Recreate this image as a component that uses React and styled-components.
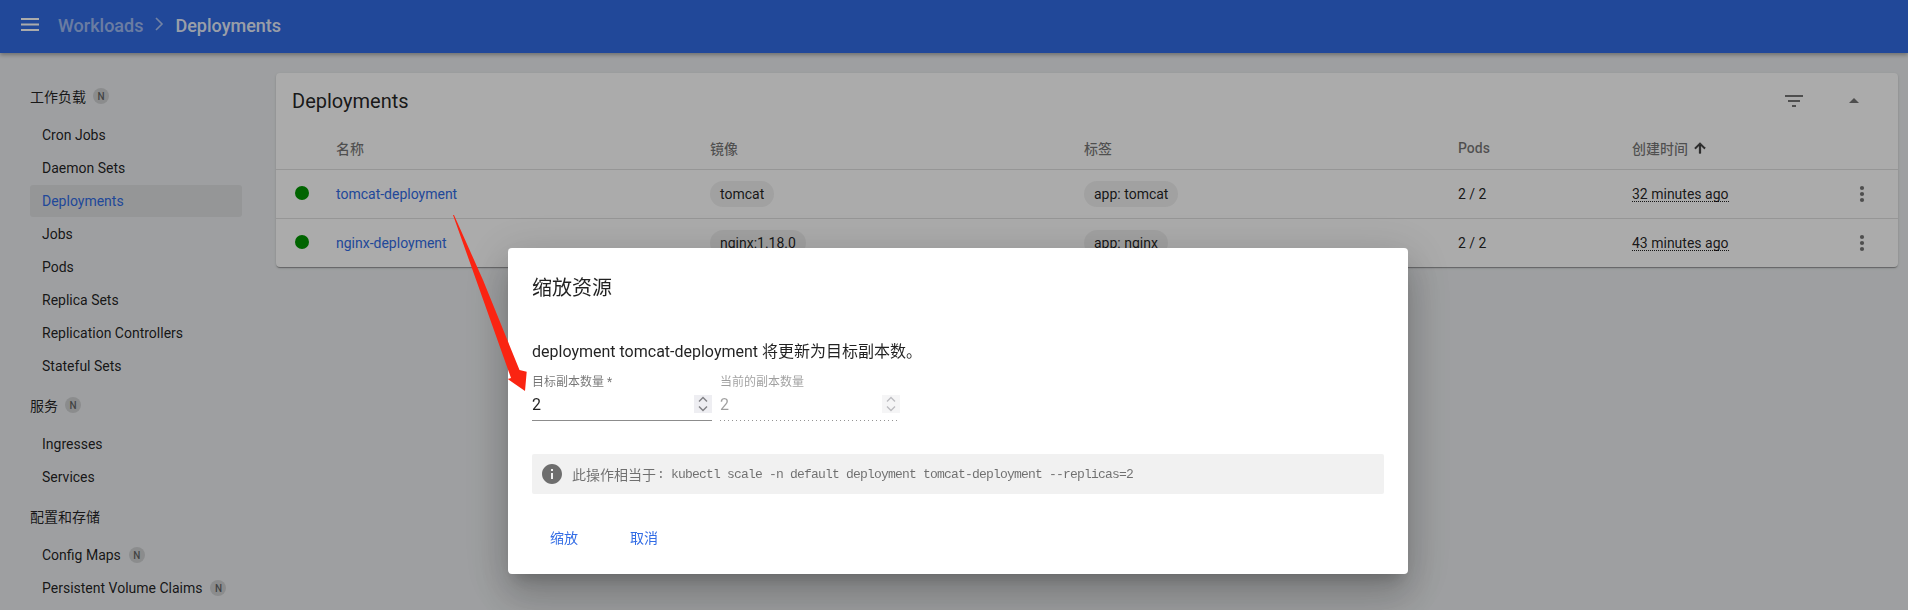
import React from 'react';
import styled, { createGlobalStyle } from 'styled-components';

const GlobalStyle = createGlobalStyle`
  html, body {
    margin: 0;
    height: 100%;
    overflow: hidden;
    background: #eceef0;
    font-family: Roboto, "Noto Sans CJK SC", sans-serif;
    font-size: 14px;
    color: rgba(0, 0, 0, 0.87);
  }
`;

const Page = styled.div`
  height: 610px;
  overflow: hidden;
  display: flex;
  flex-direction: column;
`;

const Toolbar = styled.header`
  flex: none;
  height: 53px;
  box-sizing: border-box;
  background: #326ce5;
  box-shadow: 0 2px 4px rgba(0, 0, 0, 0.3);
  display: flex;
  align-items: center;
  padding: 0 0 2px 21px;
  color: #fff;
  position: relative;
`;

const Crumb = styled.span`
  font-size: 18px;
  font-weight: 500;
  color: ${(props) => (props.$current ? 'rgba(255,255,255,0.9)' : 'rgba(255,255,255,0.55)')};
`;

const MenuIcon = styled.svg`
  width: 18px;
  height: 13px;
  margin: -2px 19px 0 0;
`;

const ChevronIcon = styled.svg`
  width: 10px;
  height: 14px;
  margin: -3px 11px 0 11px;
`;

const Body = styled.div`
  flex: 1;
  display: flex;
  min-height: 0;
`;

const Sidebar = styled.nav`
  flex: none;
  width: 246px;
  padding: 31px 0 0 30px;
  box-sizing: content-box;
`;

const SideGroup = styled.div`
  display: flex;
  flex-direction: column;
  width: 212px;
  margin-bottom: 10px;
`;

const SideTitle = styled.div`
  height: 24px;
  display: flex;
  align-items: center;
  gap: 7px;
  margin-bottom: 11px;
`;

const SideItem = styled.div`
  height: 32px;
  margin-bottom: 1px;
  display: flex;
  align-items: center;
  gap: 8px;
  padding-left: 12px;
  border-radius: 3px;
  color: ${(props) => (props.$active ? '#326ce5' : 'rgba(0, 0, 0, 0.87)')};
  background: ${(props) => (props.$active ? 'rgba(0, 0, 0, 0.06)' : 'transparent')};
`;

const Badge = styled.span`
  width: 16px;
  height: 16px;
  border-radius: 50%;
  background: rgba(0, 0, 0, 0.12);
  color: rgba(0, 0, 0, 0.54);
  font-size: 10px;
  font-weight: 500;
  display: inline-flex;
  align-items: center;
  justify-content: center;
`;

const Main = styled.main`
  flex: 1;
  min-width: 0;
  padding: 20px 10px 0 0;
`;

const Card = styled.section`
  background: #fff;
  border-radius: 4px;
  box-shadow: 0 2px 1px -1px rgba(0, 0, 0, 0.2), 0 1px 1px rgba(0, 0, 0, 0.14), 0 1px 3px rgba(0, 0, 0, 0.12);
`;

const CardHeader = styled.div`
  height: 56px;
  display: flex;
  align-items: center;
  padding-left: 16px;
`;

const CardTitle = styled.h2`
  flex: 1;
  margin: 0;
  font-size: 20px;
  font-weight: 400;
`;

const HeaderAction = styled.button`
  width: 24px;
  height: 24px;
  padding: 0;
  border: 0;
  background: none;
  display: flex;
  align-items: center;
  justify-content: center;
  margin-right: ${(props) => props.$right}px;
`;

const Row = styled.div`
  display: grid;
  grid-template-columns: 60px 374px 374px 374px 174px 1fr 24px;
  align-items: center;
  height: ${(props) => (props.$head ? 38 : 48)}px;
  padding: 0 24px ${(props) => (props.$head ? 2 : 0)}px 0;
  border-bottom: ${(props) => (props.$last ? 'none' : '1px solid rgba(0, 0, 0, 0.12)')};
`;

const HeadCell = styled.div`
  display: flex;
  align-items: center;
  gap: 4px;
  font-size: 14px;
  font-weight: 500;
  color: rgba(0, 0, 0, 0.54);
`;

const StatusDot = styled.span`
  width: 14px;
  height: 14px;
  margin: -2px 0 0 19px;
  border-radius: 50%;
  background: #009500;
`;

const NameLink = styled.a`
  color: #326ce5;
`;

const Chip = styled.span`
  display: inline-flex;
  align-items: center;
  height: 26px;
  padding: 0 10px;
  border-radius: 13px;
  background: rgba(0, 0, 0, 0.06);
`;

const Age = styled.span`
  justify-self: start;
  border-bottom: 1px dotted rgba(0, 0, 0, 0.87);
  line-height: 14px;
`;

const Overlay = styled.div`
  position: fixed;
  inset: 0;
  background: rgba(0, 0, 0, 0.33);
  padding: 248px 0 0 508px;
`;

const Dialog = styled.div`
  width: 900px;
  height: 326px;
  box-sizing: border-box;
  padding: 24px 24px 0;
  background: #fff;
  border-radius: 4px;
  box-shadow: 0 11px 15px -7px rgba(0, 0, 0, 0.2), 0 24px 38px 3px rgba(0, 0, 0, 0.14), 0 9px 46px 8px rgba(0, 0, 0, 0.12);
`;

const DialogTitle = styled.h2`
  margin: 0 0 36px;
  font-size: 20px;
  font-weight: 400;
  line-height: 32px;
`;

const DialogText = styled.p`
  margin: 0 0 11px;
  font-size: 16px;
  line-height: 24px;
`;

const Fields = styled.div`
  display: flex;
  gap: 8px;
  margin-bottom: 33px;
`;

const Field = styled.div`
  width: 180px;
`;

const FieldLabel = styled.div`
  font-size: 12px;
  line-height: 14px;
  color: ${(props) => (props.$disabled ? 'rgba(0,0,0,0.38)' : 'rgba(0,0,0,0.54)')};
`;

const FieldInput = styled.div`
  height: 24px;
  margin-top: 3px;
  padding-bottom: 5px;
  display: flex;
  align-items: center;
  justify-content: space-between;
  font-size: 16px;
  color: ${(props) => (props.$disabled ? 'rgba(0,0,0,0.38)' : 'rgba(0,0,0,0.87)')};
  background: ${(props) =>
    props.$disabled
      ? 'linear-gradient(to right, rgba(0,0,0,0.42) 0, rgba(0,0,0,0.42) 25%, transparent 25%) left bottom / 4px 1px repeat-x'
      : 'linear-gradient(rgba(0,0,0,0.45), rgba(0,0,0,0.45)) left bottom / 100% 1px no-repeat'};
`;

const Spinner = styled.span`
  width: 18px;
  height: 18px;
  display: flex;
  align-items: center;
  justify-content: center;
  background: ${(props) => (props.$disabled ? '#f5f5f6' : '#eeeef2')};
`;

const InfoBox = styled.div`
  height: 40px;
  display: flex;
  align-items: center;
  padding-left: 10px;
  gap: 10px;
  background: #f1f1f1;
  border-radius: 2px;
  color: rgba(0, 0, 0, 0.54);
  margin-bottom: 25px;
`;

const InfoText = styled.span`
  display: flex;
  align-items: center;
  font-size: 14px;
`;

const Code = styled.code`
  font-family: "Liberation Mono", monospace;
  font-size: 13px;
  letter-spacing: -0.8px;
  white-space: pre;
  margin-left: 1px;
`;

const Actions = styled.div`
  display: flex;
  gap: 16px;
`;

const ActionButton = styled.button`
  width: 64px;
  height: 36px;
  padding: 0;
  border: 0;
  background: none;
  font: inherit;
  color: #326ce5;
`;

const ArrowMark = styled.svg`
  position: absolute;
  left: 440px;
  top: 205px;
  width: 100px;
  height: 195px;
`;

const groups = [
  {
    title: '工作负载',
    items: ['Cron Jobs', 'Daemon Sets', 'Deployments', 'Jobs', 'Pods', 'Replica Sets', 'Replication Controllers', 'Stateful Sets'],
  },
  { title: '服务', items: ['Ingresses', 'Services'] },
  { title: '配置和存储', noBadge: true, items: ['Config Maps', 'Persistent Volume Claims'] },
];

const withBadge = ['Config Maps', 'Persistent Volume Claims'];

const rows = [
  { name: 'tomcat-deployment', image: 'tomcat', label: 'app: tomcat', age: '32 minutes ago' },
  { name: 'nginx-deployment', image: 'nginx:1.18.0', label: 'app: nginx', age: '43 minutes ago' },
];

const SpinArrows = ({ color }) => (
  <svg width="10" height="16" viewBox="0 0 10 16" fill="none" stroke={color} strokeWidth="1.4">
    <path d="M1 5.5 5 1.5 9 5.5M1 10.5 5 14.5 9 10.5" />
  </svg>
);

const DotsIcon = () => (
  <svg width="24" height="24" viewBox="0 0 24 24" fill="rgba(0,0,0,0.54)">
    <circle cx="12" cy="6" r="2.1" />
    <circle cx="12" cy="12" r="2.1" />
    <circle cx="12" cy="18" r="2.1" />
  </svg>
);

const App = () => {
  return (
    <Page>
      <GlobalStyle />
      <Toolbar>
        <MenuIcon viewBox="0 0 18 13" fill="#fff">
          <path d="M0 0h18v2H0zM0 5.5h18v2H0zM0 11h18v2H0z" />
        </MenuIcon>
        <Crumb>Workloads</Crumb>
        <ChevronIcon viewBox="0 0 10 14" fill="none" stroke="rgba(255,255,255,0.6)" strokeWidth="1.6">
          <path d="M2 1l6 6-6 6" />
        </ChevronIcon>
        <Crumb $current>Deployments</Crumb>
      </Toolbar>
      <Body>
        <Sidebar>
          {groups.map((group) => (
            <SideGroup key={group.title}>
              <SideTitle>
                {group.title}
                {!group.noBadge && <Badge>N</Badge>}
              </SideTitle>
              {group.items.map((item) => (
                <SideItem key={item} $active={item === 'Deployments'}>
                  {item}
                  {withBadge.includes(item) && <Badge>N</Badge>}
                </SideItem>
              ))}
            </SideGroup>
          ))}
        </Sidebar>
        <Main>
          <Card>
            <CardHeader>
              <CardTitle>Deployments</CardTitle>
              <HeaderAction $right={36}>
                <svg width="24" height="24" viewBox="0 0 24 24" fill="rgba(0,0,0,0.54)">
                  <path d="M3 6h18v2H3zM6 11h12v2H6zM10 16h4v2h-4z" />
                </svg>
              </HeaderAction>
              <HeaderAction $right={32}>
                <svg width="24" height="24" viewBox="0 0 24 24" fill="rgba(0,0,0,0.54)">
                  <path d="M7 14l5-5 5 5z" />
                </svg>
              </HeaderAction>
            </CardHeader>
            <Row $head>
              <span />
              <HeadCell>名称</HeadCell>
              <HeadCell>镜像</HeadCell>
              <HeadCell>标签</HeadCell>
              <HeadCell>Pods</HeadCell>
              <HeadCell>
                创建时间
                <svg width="16" height="16" viewBox="0 0 24 24" fill="rgba(0,0,0,0.7)" stroke="rgba(0,0,0,0.7)" strokeWidth="1.2">
                  <path d="M4 12l1.41 1.41L11 7.83V20h2V7.83l5.58 5.59L20 12l-8-8-8 8z" />
                </svg>
              </HeadCell>
              <span />
            </Row>
            {rows.map((row, i) => (
              <Row key={row.name} $last={i === rows.length - 1}>
                <StatusDot />
                <NameLink>{row.name}</NameLink>
                <span><Chip>{row.image}</Chip></span>
                <span><Chip>{row.label}</Chip></span>
                <span>2 / 2</span>
                <Age>{row.age}</Age>
                <DotsIcon />
              </Row>
            ))}
          </Card>
        </Main>
      </Body>
      <Overlay>
        <Dialog>
          <DialogTitle>缩放资源</DialogTitle>
          <DialogText>deployment tomcat-deployment 将更新为目标副本数。</DialogText>
          <Fields>
            <Field>
              <FieldLabel>目标副本数量 *</FieldLabel>
              <FieldInput>
                2
                <Spinner><SpinArrows color="#808084" /></Spinner>
              </FieldInput>
            </Field>
            <Field>
              <FieldLabel $disabled>当前的副本数量</FieldLabel>
              <FieldInput $disabled>
                2
                <Spinner $disabled><SpinArrows color="#bcbcc0" /></Spinner>
              </FieldInput>
            </Field>
          </Fields>
          <InfoBox>
            <svg width="20" height="20" viewBox="2 2 20 20" fill="#6e6e6e">
              <path d="M12 2C6.48 2 2 6.48 2 12s4.48 10 10 10 10-4.48 10-10S17.52 2 12 2zm1 15h-2v-6h2v6zm0-8h-2V7h2v2z" />
            </svg>
            <InfoText>
              此操作相当于<Code>: kubectl scale -n default deployment tomcat-deployment --replicas=2</Code>
            </InfoText>
          </InfoBox>
          <Actions>
            <ActionButton>缩放</ActionButton>
            <ActionButton>取消</ActionButton>
          </Actions>
        </Dialog>
        <ArrowMark viewBox="0 0 100 195">
          <polygon points="13,10 14,10 43,75 79.5,165 86.7,166.7 85,186 67.7,174 71,173" fill="#fa2412" />
        </ArrowMark>
      </Overlay>
    </Page>
  );
};

export default App;
